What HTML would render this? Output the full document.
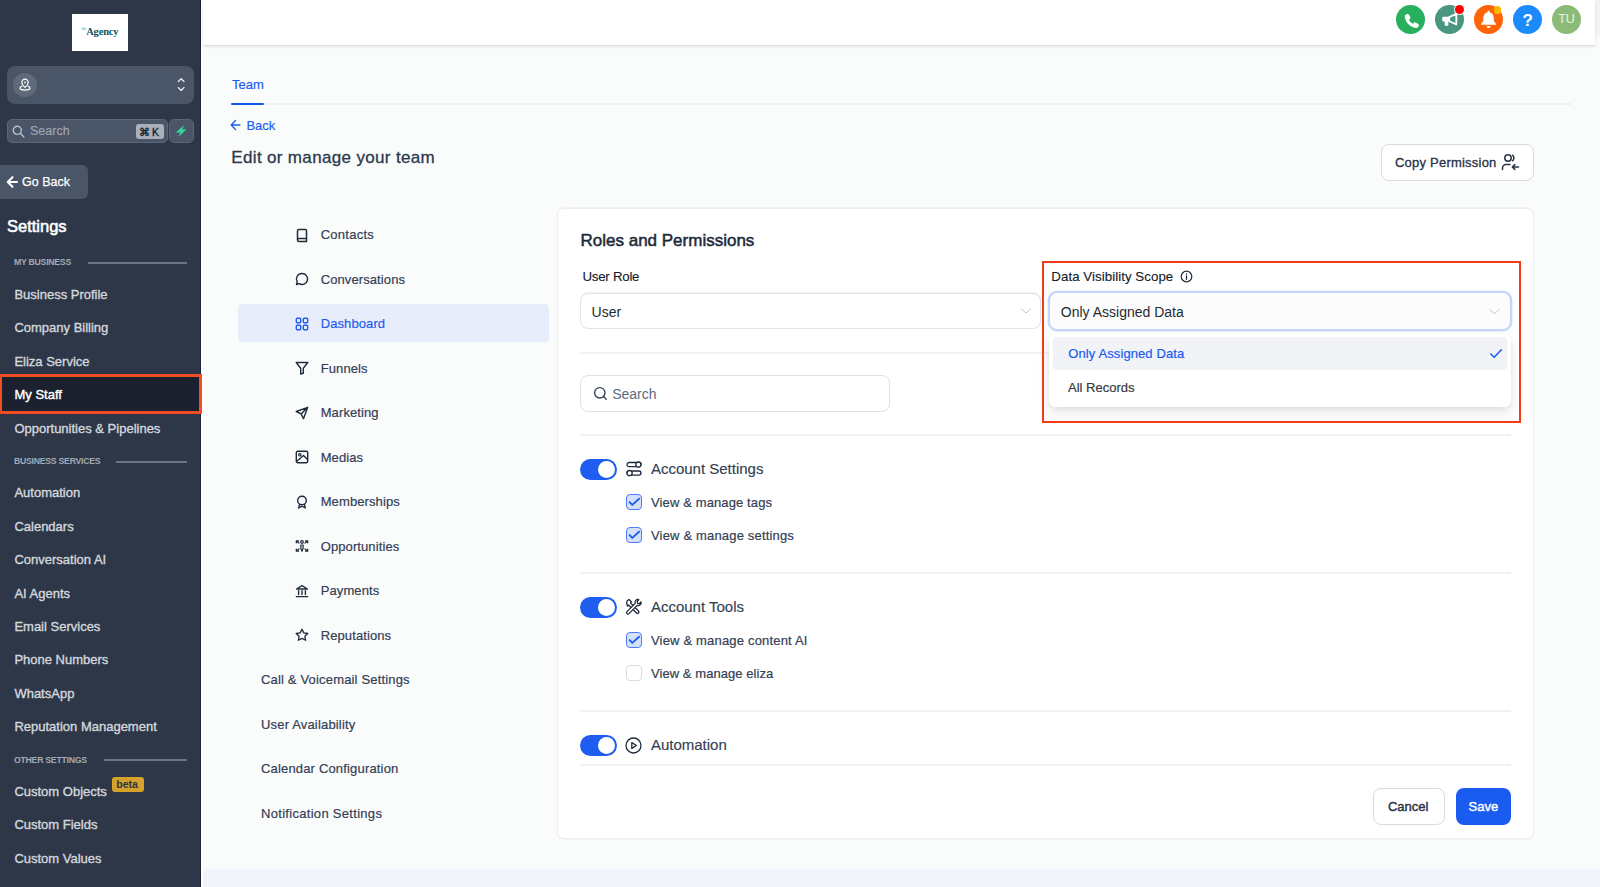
<!DOCTYPE html>
<html><head><meta charset="utf-8"><style>
html,body{margin:0;padding:0;}
body{width:1600px;height:887px;overflow:hidden;position:relative;background:#fafbfc;font-family:"Liberation Sans",sans-serif;}
.t{position:absolute;white-space:nowrap;line-height:1;}
.b{position:absolute;}
svg.b{overflow:visible;}
</style></head><body>
<div class="b" style="left:0px;top:0px;width:200px;height:887px;background:#2e3748"></div>
<div class="b" style="left:200px;top:0px;width:1px;height:887px;background:#1b2434"></div>
<div class="b" style="left:201px;top:0px;width:2px;height:887px;background:#ffffff"></div>
<div class="b" style="left:72px;top:14px;width:56px;height:37px;background:#fff"></div>
<div class="t " style="left:81.5px;top:26.61px;font-size:10.5px;color:#0f5560;font-weight:700;font-family:'Liberation Serif',serif;letter-spacing:-0.2px"><span style="font-size:4px;vertical-align:5px;color:#7cc4c4">the</span>Agency</div>
<div class="b" style="left:7px;top:66px;width:187px;height:38px;background:#4a5567;border-radius:8px"></div>
<div class="b" style="left:13px;top:73px;width:24px;height:24px;background:#5f6a7a;border-radius:50%"></div>
<svg class="b" style="left:19px;top:78px;" width="12" height="13" viewBox="0 0 12 13" fill="none"><path d="M6 1.2a3.2 3.2 0 0 0-3.2 3.2c0 2.3 3.2 5 3.2 5s3.2-2.7 3.2-5A3.2 3.2 0 0 0 6 1.2z" stroke="#fff" stroke-width="1.2"/><circle cx="6" cy="4.4" r="0.9" fill="#fff"/><path d="M3.3 8.2C1.9 8.6 1 9.3 1 10.1c0 1.2 2.2 2 5 2s5-.8 5-2c0-.8-.9-1.5-2.3-1.9" stroke="#fff" stroke-width="1.2"/></svg>
<svg class="b" style="left:175px;top:75px;" width="12" height="18" viewBox="0 0 12 18" fill="none"><path d="M3.3 6.5L6.2 3.8L9 6.5M3.3 12.6L6.2 15.4L9 12.6" stroke="#e5e7eb" stroke-width="1.35" stroke-linecap="round" stroke-linejoin="round"/></svg>
<div class="b" style="left:7px;top:119px;width:161px;height:24px;background:#4a5567;border:1px solid #5a6577;border-radius:5px;box-sizing:border-box"></div>
<svg class="b" style="left:12px;top:125px;" width="13" height="13" viewBox="0 0 13 13" fill="none"><circle cx="5.3" cy="5.3" r="4.1" stroke="#b8c0cc" stroke-width="1.4"/><path d="M8.3 8.3l3.6 3.6" stroke="#b8c0cc" stroke-width="1.4" stroke-linecap="round"/></svg>
<div class="t " style="left:30px;top:125.42px;font-size:12.5px;color:#9ea6b2;font-weight:400;-webkit-text-stroke:0.15px #9ea6b2">Search</div>
<div class="b" style="left:136px;top:124px;width:28px;height:15px;background:#a9b0bb;border-radius:3px"></div>
<div class="t " style="left:139px;top:126.61px;font-size:10.5px;color:#111827;font-weight:400;-webkit-text-stroke:0.3px #111827">&#8984;&thinsp;K</div>
<div class="b" style="left:169px;top:119px;width:25px;height:24px;background:#4a5567;border:1px solid #5a6577;border-radius:5px;box-sizing:border-box"></div>
<svg class="b" style="left:175px;top:125px;" width="12" height="12" viewBox="0 0 12 12" fill="none"><path d="M8.6 0.8L1.3 7.3h4.3L4 11.2 11 4.6H6.8z" fill="#37d399" stroke="#37d399" stroke-width="0.5" stroke-linejoin="round"/></svg>
<div class="b" style="left:0px;top:165px;width:88px;height:34px;background:#4a5567;border-radius:0 6px 6px 0"></div>
<svg class="b" style="left:6px;top:175px;" width="12" height="14" viewBox="0 0 12 14" fill="none"><path d="M11 7H2M6.5 2.2L1.8 7l4.7 4.8" stroke="#fff" stroke-width="2.1" stroke-linecap="round" stroke-linejoin="round"/></svg>
<div class="t " style="left:22px;top:176.42px;font-size:12.5px;color:#ffffff;font-weight:400;-webkit-text-stroke:0.25px #fff">Go Back</div>
<div class="t " style="left:7px;top:217.53px;font-size:16.5px;color:#ffffff;font-weight:400;-webkit-text-stroke:0.55px #fff">Settings</div>
<div class="t " style="left:14px;top:258.43px;font-size:8.7px;color:#a3aab5;font-weight:700;letter-spacing:-0.25px">MY BUSINESS</div>
<div class="b" style="left:88px;top:262px;width:99px;height:2px;background:#6b7280"></div>
<div class="t " style="left:14.4px;top:287.99px;font-size:13px;color:#d3d7de;font-weight:400;-webkit-text-stroke:0.35px #d3d7de">Business Profile</div>
<div class="t " style="left:14.4px;top:321.29px;font-size:13px;color:#d3d7de;font-weight:400;-webkit-text-stroke:0.35px #d3d7de">Company Billing</div>
<div class="t " style="left:14.4px;top:354.59px;font-size:13px;color:#d3d7de;font-weight:400;-webkit-text-stroke:0.35px #d3d7de">Eliza Service</div>
<div class="b" style="left:0px;top:374px;width:202px;height:40px;background:#1c2130;border:3px solid #f24c22;border-left-width:2.5px;box-sizing:border-box"></div>
<div class="t " style="left:14.5px;top:387.99px;font-size:13px;color:#ffffff;font-weight:400;-webkit-text-stroke:0.4px #fff">My Staff</div>
<div class="t " style="left:14.4px;top:421.59px;font-size:13px;color:#d3d7de;font-weight:400;-webkit-text-stroke:0.35px #d3d7de">Opportunities &amp; Pipelines</div>
<div class="t " style="left:14px;top:457.43px;font-size:8.7px;color:#a3aab5;font-weight:700;letter-spacing:-0.25px">BUSINESS SERVICES</div>
<div class="b" style="left:116px;top:461px;width:71px;height:2px;background:#6b7280"></div>
<div class="t " style="left:14.4px;top:486.49px;font-size:13px;color:#d3d7de;font-weight:400;-webkit-text-stroke:0.35px #d3d7de">Automation</div>
<div class="t " style="left:14.4px;top:519.99px;font-size:13px;color:#d3d7de;font-weight:400;-webkit-text-stroke:0.35px #d3d7de">Calendars</div>
<div class="t " style="left:14.4px;top:553.29px;font-size:13px;color:#d3d7de;font-weight:400;-webkit-text-stroke:0.35px #d3d7de">Conversation AI</div>
<div class="t " style="left:14.4px;top:586.59px;font-size:13px;color:#d3d7de;font-weight:400;-webkit-text-stroke:0.35px #d3d7de">AI Agents</div>
<div class="t " style="left:14.4px;top:619.99px;font-size:13px;color:#d3d7de;font-weight:400;-webkit-text-stroke:0.35px #d3d7de">Email Services</div>
<div class="t " style="left:14.4px;top:653.29px;font-size:13px;color:#d3d7de;font-weight:400;-webkit-text-stroke:0.35px #d3d7de">Phone Numbers</div>
<div class="t " style="left:14.4px;top:686.59px;font-size:13px;color:#d3d7de;font-weight:400;-webkit-text-stroke:0.35px #d3d7de">WhatsApp</div>
<div class="t " style="left:14.4px;top:719.99px;font-size:13px;color:#d3d7de;font-weight:400;-webkit-text-stroke:0.35px #d3d7de">Reputation Management</div>
<div class="t " style="left:14px;top:755.73px;font-size:8.7px;color:#a3aab5;font-weight:700;letter-spacing:-0.25px">OTHER SETTINGS</div>
<div class="b" style="left:104px;top:759px;width:83px;height:2px;background:#6b7280"></div>
<div class="t " style="left:14.4px;top:784.79px;font-size:13px;color:#d3d7de;font-weight:400;-webkit-text-stroke:0.35px #d3d7de">Custom Objects</div>
<div class="t " style="left:14.4px;top:818.19px;font-size:13px;color:#d3d7de;font-weight:400;-webkit-text-stroke:0.35px #d3d7de">Custom Fields</div>
<div class="t " style="left:14.4px;top:851.69px;font-size:13px;color:#d3d7de;font-weight:400;-webkit-text-stroke:0.35px #d3d7de">Custom Values</div>
<div class="b" style="left:111.5px;top:777px;width:32.5px;height:15px;background:#d6a22b;border-radius:3px"></div>
<div class="t " style="left:116.3px;top:778.91px;font-size:10.5px;color:#2b3443;font-weight:700;">beta</div>
<div class="b" style="left:203px;top:0px;width:1397px;height:869px;background:#fafcfc"></div>
<div class="b" style="left:203px;top:869px;width:1397px;height:18px;background:#f1f5f9"></div>
<div class="b" style="left:1595px;top:0px;width:5px;height:35px;background:#f1f5f9"></div>
<div class="b" style="left:203px;top:0px;width:1392px;height:45px;background:#fff;box-shadow:0 1.5px 3px rgba(0,0,0,0.11),0 1px 1px rgba(0,0,0,0.04)"></div>
<div class="b" style="left:1395.75px;top:4.850000000000001px;width:29.5px;height:29.5px;background:#28b05f;border-radius:50%"></div>
<svg class="b" style="left:1403.5px;top:12.8px;" width="14" height="14" viewBox="0 0 14 14" fill="none"><path d="M3.2 .9c.6-.3 1.300-.1 1.600.5l1.500 2.800c.3.6.1 1.200-.3 1.600l-1.100.9c.8 1.800 2.300 3.300 4.100 4.100l.9-1.100c.4-.5 1.100-.6 1.600-.3l2.800 1.500c.6.3.8 1 .5 1.600l-.8 1.500c-.4.700-1.200 1.100-2 1C6.400 14.400 1.300 9.300.8 3.700c-.1-.8.3-1.600 1-2z" fill="#fff"/></svg>
<div class="b" style="left:1435.0px;top:4.800000000000001px;width:29.4px;height:29.4px;background:#4a9680;border-radius:50%"></div>
<svg class="b" style="left:1435px;top:5px;" width="30" height="30" viewBox="0 0 30 30" fill="none"><rect x="7.3" y="11.8" width="7" height="4.7" rx="1" fill="#fff"/><rect x="9.7" y="15" width="3.6" height="5.8" rx="0.9" fill="#fff"/><path d="M14.2 12.1L21.3 8.9v10.500L14.200 16.200z" stroke="#fff" stroke-width="1.8" stroke-linejoin="round" fill="#4a9680"/><rect x="21" y="12.8" width="1.3" height="2.2" rx=".6" fill="#fff"/></svg>
<div class="b" style="left:1454.2px;top:3.8px;width:11.2px;height:11.2px;background:#fff;border-radius:50%;opacity:0.9"></div>
<div class="b" style="left:1455.1px;top:4.7px;width:9.4px;height:9.4px;background:#ff0000;border-radius:50%"></div>
<div class="b" style="left:1473.9px;top:5.000000000000002px;width:29.2px;height:29.2px;background:#ff6508;border-radius:50%"></div>
<svg class="b" style="left:1474px;top:5px;" width="30" height="30" viewBox="0 0 30 30" fill="none"><path d="M14.550 5.800c-.6 0-1 .4-1 1v.5C10.600 8 9.300 10.400 9.300 13.300v2.600L7 19v.7h15.100V19l-2.300-3.100V13.300c0-2.900-1.300-5.300-4.250-6V6.800c0-.6-.4-1-1-1z" fill="#fff"/><path d="M12.500 20.900h4.200a2.100 2 0 0 1-4.200 0z" fill="#fff"/></svg>
<div class="b" style="left:1493.9px;top:6.3px;width:7.6px;height:7.6px;background:#ffb800;border-radius:50%"></div>
<div class="b" style="left:1512.55px;top:4.850000000000001px;width:29.5px;height:29.5px;background:#1c8bf9;border-radius:50%"></div>
<div class="t " style="left:1522.6px;top:11.51px;font-size:17px;color:#fff;font-weight:700;">?</div>
<div class="b" style="left:1551.55px;top:4.850000000000001px;width:29.5px;height:29.5px;background:#8cbb78;border-radius:50%"></div>
<div class="t " style="left:1558.2px;top:13.22px;font-size:12.5px;color:#e9f1e5;font-weight:400;">TU</div>
<div class="t " style="left:232px;top:78.09px;font-size:13px;color:#1e5df0;font-weight:400;-webkit-text-stroke:0.2px #1e5df0">Team</div>
<div class="b" style="left:231px;top:103px;width:33px;height:2px;background:#1257f0;border-radius:1px"></div>
<div class="b" style="left:264px;top:103px;width:1307px;height:2px;background:#eff0f3"></div>
<svg class="b" style="left:230px;top:119px;" width="11" height="12" viewBox="0 0 11 12" fill="none"><path d="M10 6H1.5M5.5 1.5L1.2 6l4.3 4.5" stroke="#1e5df0" stroke-width="1.3" stroke-linecap="round" stroke-linejoin="round"/></svg>
<div class="t " style="left:246.4px;top:119.39px;font-size:13px;color:#1e5df0;font-weight:400;-webkit-text-stroke:0.2px #1e5df0">Back</div>
<div class="t " style="left:231.3px;top:148.51px;font-size:17px;color:#2c384b;font-weight:400;-webkit-text-stroke:0.3px #2c384b;letter-spacing:0.34px">Edit or manage your team</div>
<div class="b" style="left:1381px;top:144px;width:153px;height:37px;background:#fff;border:1px solid #d7dbe2;border-radius:8px;box-sizing:border-box"></div>
<div class="t " style="left:1395px;top:156.24px;font-size:13px;color:#263245;font-weight:400;-webkit-text-stroke:0.3px #263245;letter-spacing:0.22px">Copy Permission</div>
<svg class="b" style="left:1501px;top:153px;" width="19" height="18" viewBox="0 0 19 18" fill="none"><circle cx="7" cy="5" r="3.2" stroke="#263245" stroke-width="1.5"/><path d="M11.5 2.2c.9.6 1.4 1.600 1.400 2.800s-.5 2.200-1.400 2.800" stroke="#263245" stroke-width="1.5" stroke-linecap="round"/><path d="M1.5 16.5v-1.500c0-1.900 1.600-3.500 3.500-3.500h4" stroke="#263245" stroke-width="1.5" stroke-linecap="round"/><path d="M17.500 14H11.500M13.800 11.600L11.300 14l2.500 2.400" stroke="#263245" stroke-width="1.5" stroke-linecap="round" stroke-linejoin="round"/></svg>
<div class="b" style="left:238px;top:304px;width:311px;height:38px;background:#e8edfb;border-radius:4px"></div>
<svg class="b" style="left:295px;top:227.8px;" width="14" height="14" viewBox="0 0 14 14" fill="none"><path d="M2.5 12V3a1.5 1.5 0 0 1 1.5-1.500h6.500a1 1 0 0 1 1 1V13.500H4a1.500 1.500 0 0 1-1.500-1.500zM2.5 12a1.5 1.5 0 0 1 1.5-1.5h7.5" stroke="#1f2a3c" stroke-width="1.5" stroke-linejoin="round"/></svg>
<div class="t " style="left:320.7px;top:228.29px;font-size:13px;color:#344054;font-weight:400;-webkit-text-stroke:0.2px #344054;letter-spacing:0.25px">Contacts</div>
<svg class="b" style="left:295px;top:272.28000000000003px;" width="14" height="14" viewBox="0 0 14 14" fill="none"><path d="M7 1.5a5.5 5.5 0 1 1-2.8 10.200L1.500 12.500l.7-2.700A5.500 5.500 0 0 1 7 1.500z" stroke="#1f2a3c" stroke-width="1.4" stroke-linejoin="round"/></svg>
<div class="t " style="left:320.7px;top:272.77px;font-size:13px;color:#344054;font-weight:400;-webkit-text-stroke:0.2px #344054;letter-spacing:0.1px">Conversations</div>
<svg class="b" style="left:295px;top:316.76px;" width="14" height="14" viewBox="0 0 14 14" fill="none"><rect x="1.3" y="1.3" width="4.4" height="4.4" rx="1" stroke="#1e5df0" stroke-width="1.4"/><rect x="8.3" y="1.3" width="4.4" height="4.4" rx="1" stroke="#1e5df0" stroke-width="1.4"/><rect x="1.3" y="8.3" width="4.4" height="4.4" rx="1" stroke="#1e5df0" stroke-width="1.4"/><rect x="8.3" y="8.3" width="4.4" height="4.4" rx="1" stroke="#1e5df0" stroke-width="1.4"/></svg>
<div class="t " style="left:320.7px;top:317.25px;font-size:13px;color:#1e5df0;font-weight:400;-webkit-text-stroke:0.2px #1e5df0;letter-spacing:0.1px">Dashboard</div>
<svg class="b" style="left:295px;top:361.24px;" width="14" height="14" viewBox="0 0 14 14" fill="none"><path d="M1.2 1.5h11.600L8.300 7.200V12.300L5.700 13V7.200z" stroke="#1f2a3c" stroke-width="1.4" stroke-linejoin="round"/></svg>
<div class="t " style="left:320.7px;top:361.73px;font-size:13px;color:#344054;font-weight:400;-webkit-text-stroke:0.2px #344054;letter-spacing:0.1px">Funnels</div>
<svg class="b" style="left:295px;top:405.72px;" width="14" height="14" viewBox="0 0 14 14" fill="none"><path d="M12.700 1.300L1.300 5.500l4.800 2.400 2.400 4.800zM12.700 1.300L6.100 7.900" stroke="#1f2a3c" stroke-width="1.4" stroke-linejoin="round"/></svg>
<div class="t " style="left:320.7px;top:406.21px;font-size:13px;color:#344054;font-weight:400;-webkit-text-stroke:0.2px #344054;letter-spacing:0.1px">Marketing</div>
<svg class="b" style="left:295px;top:450.2px;" width="14" height="14" viewBox="0 0 14 14" fill="none"><rect x="1.3" y="1.3" width="11.4" height="11.4" rx="1.500" stroke="#1f2a3c" stroke-width="1.4"/><circle cx="4.800" cy="4.800" r="1.200" stroke="#1f2a3c" stroke-width="1.2"/><path d="M1.500 11.500L8.500 5.500l4 4" stroke="#1f2a3c" stroke-width="1.4" stroke-linejoin="round"/></svg>
<div class="t " style="left:320.7px;top:450.69px;font-size:13px;color:#344054;font-weight:400;-webkit-text-stroke:0.2px #344054;letter-spacing:0.1px">Medias</div>
<svg class="b" style="left:295px;top:494.68px;" width="14" height="14" viewBox="0 0 14 14" fill="none"><circle cx="7" cy="5.5" r="4.300" stroke="#1f2a3c" stroke-width="1.4"/><path d="M4.600 9.200l-.900 3.800 3.300-1.800 3.300 1.800-.900-3.800" stroke="#1f2a3c" stroke-width="1.4" stroke-linejoin="round"/></svg>
<div class="t " style="left:320.7px;top:495.17px;font-size:13px;color:#344054;font-weight:400;-webkit-text-stroke:0.2px #344054;letter-spacing:0.1px">Memberships</div>
<svg class="b" style="left:295px;top:539.16px;" width="14" height="14" viewBox="0 0 14 14" fill="none"><circle cx="7" cy="3" r="1.300" stroke="#1f2a3c" stroke-width="1.200"/><path d="M5.900 6h2.200v3.500L7 12.300 5.900 9.500z" stroke="#1f2a3c" stroke-width="1.200" stroke-linejoin="round"/><path d="M1.300 1.800l2.600 2.200M1.300 1.800v2M1.300 1.800h2.200M12.700 1.800L10.100 4M12.700 1.800v2M12.700 1.800h-2.200M1.300 12.200l2.600-2.200M1.300 12.200v-2M1.300 12.200h2.200M12.700 12.200l-2.600-2.200M12.700 12.200v-2M12.700 12.200h-2.200" stroke="#1f2a3c" stroke-width="1.200" stroke-linecap="round"/></svg>
<div class="t " style="left:320.7px;top:539.65px;font-size:13px;color:#344054;font-weight:400;-webkit-text-stroke:0.2px #344054;letter-spacing:0.1px">Opportunities</div>
<svg class="b" style="left:295px;top:583.64px;" width="14" height="14" viewBox="0 0 14 14" fill="none"><path d="M1.500 5L7 1.600 12.500 5z" stroke="#1f2a3c" stroke-width="1.300" stroke-linejoin="round"/><path d="M1.300 12.600h11.400M3.600 6.800v3.800M7 6.800v3.800M10.400 6.800v3.800" stroke="#1f2a3c" stroke-width="1.400" stroke-linecap="round"/></svg>
<div class="t " style="left:320.7px;top:584.13px;font-size:13px;color:#344054;font-weight:400;-webkit-text-stroke:0.2px #344054;letter-spacing:0.1px">Payments</div>
<svg class="b" style="left:295px;top:628.12px;" width="14" height="14" viewBox="0 0 14 14" fill="none"><path d="M7 1.200l1.800 3.700 4 .6-2.900 2.800.7 4L7 10.400l-3.600 1.900.7-4L1.200 5.500l4-.6z" stroke="#1f2a3c" stroke-width="1.300" stroke-linejoin="round"/></svg>
<div class="t " style="left:320.7px;top:628.61px;font-size:13px;color:#344054;font-weight:400;-webkit-text-stroke:0.2px #344054;letter-spacing:0.1px">Reputations</div>
<div class="t " style="left:261px;top:673.09px;font-size:13px;color:#344054;font-weight:400;-webkit-text-stroke:0.2px #344054;letter-spacing:0.17px">Call &amp; Voicemail Settings</div>
<div class="t " style="left:261px;top:717.57px;font-size:13px;color:#344054;font-weight:400;-webkit-text-stroke:0.2px #344054;letter-spacing:0.17px">User Availability</div>
<div class="t " style="left:261px;top:762.05px;font-size:13px;color:#344054;font-weight:400;-webkit-text-stroke:0.2px #344054;letter-spacing:0.17px">Calendar Configuration</div>
<div class="t " style="left:261px;top:806.53px;font-size:13px;color:#344054;font-weight:400;-webkit-text-stroke:0.2px #344054;letter-spacing:0.3px">Notification Settings</div>
<div class="b" style="left:557px;top:208px;width:977px;height:631px;background:#fff;border:1px solid #eceef2;border-radius:7px;box-sizing:border-box;box-shadow:0 1px 0 #f1f2f5,0 -1px 0 #f1f2f5"></div>
<div class="t " style="left:580.5px;top:232.21px;font-size:17px;color:#1d2939;font-weight:400;-webkit-text-stroke:0.5px #1d2939">Roles and Permissions</div>
<div class="t " style="left:582.4px;top:270.34px;font-size:13.3px;color:#141c2b;font-weight:400;-webkit-text-stroke:0.12px #141c2b;letter-spacing:-0.25px">User Role</div>
<div class="b" style="left:580px;top:293px;width:461px;height:36px;background:#fff;border:1px solid #e1e4e9;border-radius:8px;box-sizing:border-box;box-shadow:0 -0.5px 0 #e8eaee"></div>
<div class="t " style="left:591.6px;top:304.95px;font-size:14px;color:#262a31;font-weight:400;">User</div>
<svg class="b" style="left:1020px;top:304px;" width="12" height="12" viewBox="0 0 12 12" fill="none"><path d="M1.500 4.800l4.500 4.200L10.500 4.800" stroke="#c2c6cc" stroke-width="1" stroke-linecap="round" stroke-linejoin="round"/></svg>
<div class="b" style="left:580px;top:351.6px;width:931px;height:2px;background:#f0f1f4"></div>
<div class="b" style="left:580px;top:375px;width:310px;height:37px;background:#fff;border:1px solid #dee1e6;border-radius:8px;box-sizing:border-box"></div>
<svg class="b" style="left:593px;top:386px;" width="15" height="15" viewBox="0 0 15 15" fill="none"><circle cx="6.800" cy="6.800" r="5.200" stroke="#344054" stroke-width="1.4"/><path d="M10.600 10.600l2.600 2.600" stroke="#344054" stroke-width="1.400" stroke-linecap="round"/></svg>
<div class="t " style="left:612.2px;top:386.75px;font-size:14px;color:#5e6b80;font-weight:400;">Search</div>
<div class="b" style="left:580px;top:434px;width:931px;height:2px;background:#f0f1f4"></div>
<div class="t " style="left:1051.3px;top:270.34px;font-size:13.3px;color:#141c2b;font-weight:400;-webkit-text-stroke:0.12px #141c2b;letter-spacing:0.05px">Data Visibility Scope</div>
<svg class="b" style="left:1180px;top:270px;" width="13" height="13" viewBox="0 0 13 13" fill="none"><circle cx="6.500" cy="6.500" r="5.300" stroke="#1f2a3c" stroke-width="1.200"/><path d="M6.500 6v3.300" stroke="#1f2a3c" stroke-width="1.300" stroke-linecap="round"/><circle cx="6.500" cy="4" r=".750" fill="#1f2a3c"/></svg>
<div class="b" style="left:1048px;top:291px;width:464px;height:40px;background:#fcfcfd;border:2px solid #c5d4fa;border-radius:9px;box-sizing:border-box;box-shadow:0 0 0 0.6px #dde6fd"></div>
<div class="t " style="left:1060.8px;top:304.85px;font-size:14px;color:#262a31;font-weight:400;">Only Assigned Data</div>
<svg class="b" style="left:1488px;top:304.5px;" width="13" height="12" viewBox="0 0 13 12" fill="none"><path d="M1.800 4.500l4.700 4.200 4.700-4.200" stroke="#c2c6cc" stroke-width="1" stroke-linecap="round" stroke-linejoin="round"/></svg>
<div class="b" style="left:1049px;top:334px;width:462px;height:73px;background:#fff;border-radius:6px;box-shadow:0 6px 14px rgba(16,24,40,0.10),0 2px 4px rgba(16,24,40,0.05)"></div>
<div class="b" style="left:1053px;top:337px;width:454px;height:33px;background:#f2f3f6;border-radius:4px"></div>
<div class="t " style="left:1068.3px;top:347.49px;font-size:13px;color:#1a5cf0;font-weight:400;-webkit-text-stroke:0.2px #1a5cf0;letter-spacing:0.1px">Only Assigned Data</div>
<svg class="b" style="left:1489px;top:347px;" width="14" height="13" viewBox="0 0 14 13" fill="none"><path d="M1.800 7l3.400 3.300L12.300 2.800" stroke="#1e5df0" stroke-width="1.600" stroke-linecap="round" stroke-linejoin="round"/></svg>
<div class="t " style="left:1068px;top:380.69px;font-size:13px;color:#363b44;font-weight:400;-webkit-text-stroke:0.2px #363b44">All Records</div>
<div class="b" style="left:1042px;top:261px;width:479px;height:162px;border:2px solid #f03c17;box-sizing:border-box"></div>
<div class="b" style="left:580px;top:459px;width:37px;height:21px;background:#1e5df0;border-radius:11px"></div>
<div class="b" style="left:598px;top:461px;width:17px;height:17px;background:#fff;border-radius:50%"></div>
<svg class="b" style="left:626px;top:460.5px;" width="16" height="16" viewBox="0 0 16 16" fill="none"><rect x="1" y="1.5" width="14" height="4.2" rx="2.1" stroke="#1f2a3c" stroke-width="1.3"/><rect x="1" y="10" width="14" height="4.2" rx="2.1" stroke="#1f2a3c" stroke-width="1.3"/><circle cx="12.4" cy="3.6" r="2.6" stroke="#1f2a3c" stroke-width="1.3" fill="#fff"/><circle cx="3.6" cy="12.1" r="2.6" stroke="#1f2a3c" stroke-width="1.3" fill="#fff"/></svg>
<div class="t " style="left:650.9px;top:461.30px;font-size:15px;color:#344054;font-weight:400;-webkit-text-stroke:0.15px #344054">Account Settings</div>
<div class="b" style="left:626px;top:494px;width:16px;height:16px;background:#d5e0fc;border:1px solid #4a7cf5;border-radius:4px;box-sizing:border-box"></div>
<svg class="b" style="left:626px;top:494px;" width="16" height="16" viewBox="0 0 16 16" fill="none"><path d="M3.6 8.1L6.3 10.9L13.1 4.7" stroke="#1e5df0" stroke-width="1.9" stroke-linecap="round" stroke-linejoin="round"/></svg>
<div class="t " style="left:651px;top:495.89px;font-size:13px;color:#344054;font-weight:400;-webkit-text-stroke:0.2px #344054;letter-spacing:0.12px">View &amp; manage tags</div>
<div class="b" style="left:626px;top:527px;width:16px;height:16px;background:#d5e0fc;border:1px solid #4a7cf5;border-radius:4px;box-sizing:border-box"></div>
<svg class="b" style="left:626px;top:527px;" width="16" height="16" viewBox="0 0 16 16" fill="none"><path d="M3.6 8.1L6.3 10.9L13.1 4.7" stroke="#1e5df0" stroke-width="1.9" stroke-linecap="round" stroke-linejoin="round"/></svg>
<div class="t " style="left:651px;top:529.19px;font-size:13px;color:#344054;font-weight:400;-webkit-text-stroke:0.2px #344054;letter-spacing:0.17px">View &amp; manage settings</div>
<div class="b" style="left:580px;top:572px;width:931px;height:2px;background:#f0f1f4"></div>
<div class="b" style="left:580px;top:597px;width:37px;height:21px;background:#1e5df0;border-radius:11px"></div>
<div class="b" style="left:598px;top:599px;width:17px;height:17px;background:#fff;border-radius:50%"></div>
<svg class="b" style="left:625px;top:598px;" width="17" height="17" viewBox="0 0 17 17" fill="none"><path d="M2.500 2.500l1.500-1 2.500 2.500-1 1 8 8c.6.6.6 1.400 0 2s-1.400.6-2 0l-8-8-1 1L1.500 4.500z" stroke="#1f2a3c" stroke-width="1.300" stroke-linejoin="round"/><path d="M13.800 1.500a3 3 0 0 0-3.600 3.900L2 13.600c-.6.6-.6 1.400 0 2s1.400.6 2 0l8.200-8.200a3 3 0 0 0 3.900-3.600l-1.800 1.800-1.700-.3-.3-1.700z" stroke="#1f2a3c" stroke-width="1.300" stroke-linejoin="round" fill="#fff"/></svg>
<div class="t " style="left:650.9px;top:599.30px;font-size:15px;color:#344054;font-weight:400;-webkit-text-stroke:0.15px #344054">Account Tools</div>
<div class="b" style="left:626px;top:632px;width:16px;height:16px;background:#d5e0fc;border:1px solid #4a7cf5;border-radius:4px;box-sizing:border-box"></div>
<svg class="b" style="left:626px;top:632px;" width="16" height="16" viewBox="0 0 16 16" fill="none"><path d="M3.6 8.1L6.3 10.9L13.1 4.7" stroke="#1e5df0" stroke-width="1.9" stroke-linecap="round" stroke-linejoin="round"/></svg>
<div class="t " style="left:651px;top:633.99px;font-size:13px;color:#344054;font-weight:400;-webkit-text-stroke:0.2px #344054;letter-spacing:0.18px">View &amp; manage content AI</div>
<div class="b" style="left:626px;top:665px;width:16px;height:16px;background:#fff;border:1px solid #d6dae1;border-radius:4px;box-sizing:border-box"></div>
<div class="t " style="left:651px;top:667.29px;font-size:13px;color:#344054;font-weight:400;-webkit-text-stroke:0.2px #344054;letter-spacing:0.06px">View &amp; manage eliza</div>
<div class="b" style="left:580px;top:710px;width:931px;height:2px;background:#f0f1f4"></div>
<div class="b" style="left:580px;top:735px;width:37px;height:21px;background:#1e5df0;border-radius:11px"></div>
<div class="b" style="left:598px;top:737px;width:17px;height:17px;background:#fff;border-radius:50%"></div>
<svg class="b" style="left:625px;top:737px;" width="17" height="17" viewBox="0 0 17 17" fill="none"><circle cx="8.500" cy="8.500" r="7.500" stroke="#1f2a3c" stroke-width="1.300"/><path d="M6.800 5.600v5.800l4.600-2.900z" stroke="#1f2a3c" stroke-width="1.300" stroke-linejoin="round"/></svg>
<div class="t " style="left:650.9px;top:737.30px;font-size:15px;color:#344054;font-weight:400;-webkit-text-stroke:0.15px #344054">Automation</div>
<div class="b" style="left:580px;top:764px;width:931px;height:2px;background:#f0f1f4"></div>
<div class="b" style="left:1373px;top:787.5px;width:72px;height:37px;background:#fff;border:1px solid #d7dbe2;border-radius:8px;box-sizing:border-box"></div>
<div class="t " style="left:1387.9px;top:799.89px;font-size:13px;color:#263245;font-weight:400;-webkit-text-stroke:0.4px #263245">Cancel</div>
<div class="b" style="left:1456px;top:787.5px;width:55px;height:37px;background:#1a5cf0;border-radius:8px"></div>
<div class="t " style="left:1468.5px;top:799.89px;font-size:13px;color:#ffffff;font-weight:400;-webkit-text-stroke:0.4px #fff">Save</div>

</body></html>
